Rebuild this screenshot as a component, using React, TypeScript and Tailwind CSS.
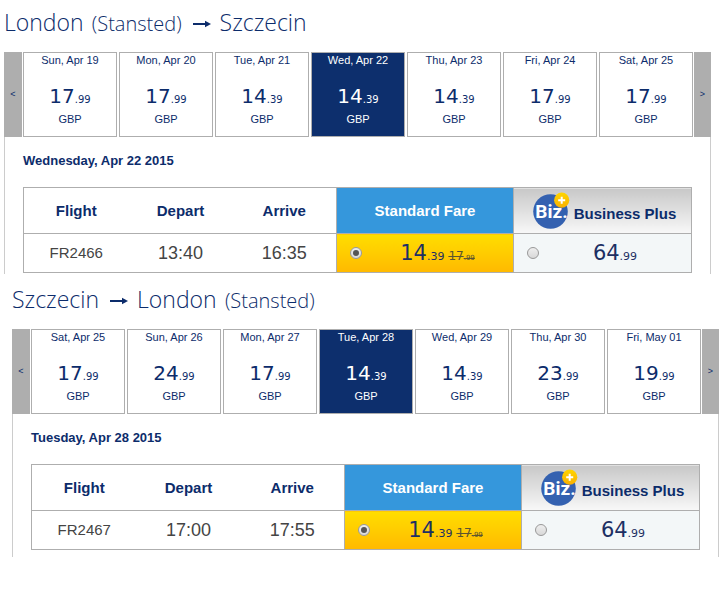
import clsx from "clsx";

type DayFare = {
  label: string;
  price: string;
};

type Trip = {
  id: string;
  from: string;
  fromAirport?: string;
  to: string;
  toAirport?: string;
  days: DayFare[];
  selected: number;
  date: string;
  flight: string;
  depart: string;
  arrive: string;
  standard: string;
  oldPrice: string;
  business: string;
  className: string;
};

const trips: Trip[] = [
  {
    id: "outbound",
    from: "London",
    fromAirport: "(Stansted)",
    to: "Szczecin",
    days: [
      { label: "Sun, Apr 19", price: "17.99" },
      { label: "Mon, Apr 20", price: "17.99" },
      { label: "Tue, Apr 21", price: "14.39" },
      { label: "Wed, Apr 22", price: "14.39" },
      { label: "Thu, Apr 23", price: "14.39" },
      { label: "Fri, Apr 24", price: "17.99" },
      { label: "Sat, Apr 25", price: "17.99" },
    ],
    selected: 3,
    date: "Wednesday, Apr 22 2015",
    flight: "FR2466",
    depart: "13:40",
    arrive: "16:35",
    standard: "14.39",
    oldPrice: "17.99",
    business: "64.99",
    className: "ml-1 mr-2",
  },
  {
    id: "return",
    from: "Szczecin",
    to: "London",
    toAirport: "(Stansted)",
    days: [
      { label: "Sat, Apr 25", price: "17.99" },
      { label: "Sun, Apr 26", price: "24.99" },
      { label: "Mon, Apr 27", price: "17.99" },
      { label: "Tue, Apr 28", price: "14.39" },
      { label: "Wed, Apr 29", price: "14.39" },
      { label: "Thu, Apr 30", price: "23.99" },
      { label: "Fri, May 01", price: "19.99" },
    ],
    selected: 3,
    date: "Tuesday, Apr 28 2015",
    flight: "FR2467",
    depart: "17:00",
    arrive: "17:55",
    standard: "14.39",
    oldPrice: "17.99",
    business: "64.99",
    className: "ml-3",
  },
];

function Place({ city, airport }: { city: string; airport?: string }) {
  return (
    <span>
      {city}
      {airport && <span className="ml-[3px] text-[20px]"> {airport}</span>}
    </span>
  );
}

function ArrowIcon() {
  return (
    <svg
      width="18"
      height="8"
      viewBox="0 0 18 8"
      className="mt-[3px] mr-[9px] ml-[11px]"
      aria-hidden="true"
    >
      <path d="M0 4h14" stroke="#0c2c6b" strokeWidth="2" />
      <path d="M12 0.8 L18 4 L12 7.2 Z" fill="#0c2c6b" />
    </svg>
  );
}

function BizIcon() {
  return (
    <svg width="37" height="37" viewBox="0 0 37 37" className="shrink-0" aria-hidden="true">
      <defs>
        <linearGradient id="badge" x1="0" y1="0" x2="0" y2="1">
          <stop offset="0" stopColor="#ffd500" />
          <stop offset="1" stopColor="#f9b000" />
        </linearGradient>
      </defs>
      <circle cx="17.5" cy="19.5" r="17.3" fill="#3461b0" />
      <text
        x="18.5"
        y="26"
        textAnchor="middle"
        fontSize="19"
        fontWeight="700"
        fontFamily="'Liberation Sans Narrow', Roboto, sans-serif"
        fill="#fff"
      >
        Biz.
      </text>
      <circle cx="28.7" cy="8.2" r="7.6" fill="url(#badge)" />
      <path d="M28.7 4.7v7M25.2 8.2h7" stroke="#fff" strokeWidth="2" />
    </svg>
  );
}

function Price({ value, large }: { value: string; large?: boolean }) {
  const [whole, cents] = value.split(".");
  return (
    <span className="font-['DejaVu_Sans',sans-serif]">
      <span className={large ? "text-[21px]" : "text-[20px]"}>{whole}</span>
      <span className={large ? "text-[11px]" : "text-[10px]"}>.{cents}</span>
    </span>
  );
}

function OldPrice({ value }: { value: string }) {
  const [whole, cents] = value.split(".");
  return (
    <s className="ml-1 inline-flex items-baseline font-['DejaVu_Sans',sans-serif] text-[12px] leading-4 text-[#5c5530]">
      <span>{whole}</span>
      <span className="text-[7px]">.{cents}</span>
    </s>
  );
}

function FareRadio({ name, label, checked }: { name: string; label: string; checked?: boolean }) {
  return (
    <input
      type="radio"
      name={name}
      aria-label={label}
      defaultChecked={checked}
      className="ml-[13px] grid size-3 shrink-0 appearance-none place-items-center rounded-full border border-[#999] bg-linear-to-b from-[#eee] to-[#d8d8d8] before:size-[6px] before:rounded-full checked:before:bg-[#555]"
    />
  );
}

function DayStrip({ days, selected }: { days: DayFare[]; selected: number }) {
  return (
    <div className="flex h-[85px] gap-px">
      <button type="button" aria-label="Previous days" className="w-[18px] bg-[#aeaeae] text-[9px]">
        &lt;
      </button>
      <div className="flex flex-1 gap-0.5">
        {days.map((day, i) => (
          <button
            type="button"
            key={day.label}
            className={clsx(
              "flex flex-1 flex-col items-center border border-[#aeaeae] text-[11px] leading-[15px]",
              i === selected && "bg-[#0d2f6d] text-white",
            )}
          >
            <span>{day.label}</span>
            <span className="mt-4 leading-6">
              <Price value={day.price} />
            </span>
            <span>GBP</span>
          </button>
        ))}
      </div>
      <button type="button" aria-label="Next days" className="w-[17px] bg-[#aeaeae] text-[9px]">
        &gt;
      </button>
    </div>
  );
}

function FlightTable({ trip }: { trip: Trip }) {
  return (
    <table className="w-full table-fixed border-collapse border border-[#aeaeae] text-center text-[15px]">
      <thead>
        <tr className="h-[46px] border-b border-[#aeaeae]">
          <th className="w-[105px] p-0 pt-0.5">Flight</th>
          <th className="w-[104px] p-0 pt-0.5">Depart</th>
          <th className="w-[104px] p-0 pt-0.5">Arrive</th>
          <th className="w-[177px] border-x border-[#aeaeae] bg-[#3597dc] p-0 pt-0.5 text-white">
            Standard Fare
          </th>
          <th className="bg-linear-to-b from-[#c8c8c8] to-[#f8f8f8] p-0 pl-1">
            <span className="flex items-center justify-center gap-1">
              <BizIcon />
              <span className="mt-2">Business Plus</span>
            </span>
          </th>
        </tr>
      </thead>
      <tbody>
        <tr className="h-[39px] text-[#444]">
          <td className="p-0">{trip.flight}</td>
          <td className="p-0 text-[18px] leading-6">{trip.depart}</td>
          <td className="p-0 text-[18px] leading-6">{trip.arrive}</td>
          <td className="border-x border-[#aeaeae] bg-linear-to-b from-[#ffde00] to-[#ffb900] p-0">
            <div className="flex items-center">
              <FareRadio name={trip.id} label="Standard Fare" checked />
              <span className="flex-1 pt-1 leading-6 text-[#1c2f63]">
                <Price value={trip.standard} large />
                <OldPrice value={trip.oldPrice} />
              </span>
            </div>
          </td>
          <td className="bg-[#f3f7f8] p-0">
            <div className="flex items-center">
              <FareRadio name={trip.id} label="Business Plus" />
              <span className="flex-1 pt-1 leading-6 text-[#1c2f63]">
                <Price value={trip.business} large />
              </span>
            </div>
          </td>
        </tr>
      </tbody>
    </table>
  );
}

function TripSection({ trip, last }: { trip: Trip; last: boolean }) {
  return (
    <section className={trip.className}>
      <h2 className="flex h-[52px] items-center pb-2 font-['Open_Sans',sans-serif] text-[23px] font-light">
        <Place city={trip.from} airport={trip.fromAirport} />
        <ArrowIcon />
        <Place city={trip.to} airport={trip.toAirport} />
      </h2>
      <DayStrip days={trip.days} selected={trip.selected} />
      <div className={clsx("border-x border-[#ccc] px-[18px] pt-4", last ? "pb-[7px]" : "pb-px")}>
        <h3 className="mb-[18px] text-[13px] leading-4 font-bold">{trip.date}</h3>
        <FlightTable trip={trip} />
      </div>
    </section>
  );
}

export default function App() {
  return (
    <main className="flex min-h-screen flex-col gap-[3px] bg-white font-['Liberation_Sans',sans-serif] text-[#0c2c6b]">
      {trips.map((trip, i) => (
        <TripSection key={trip.id} trip={trip} last={i === trips.length - 1} />
      ))}
    </main>
  );
}
